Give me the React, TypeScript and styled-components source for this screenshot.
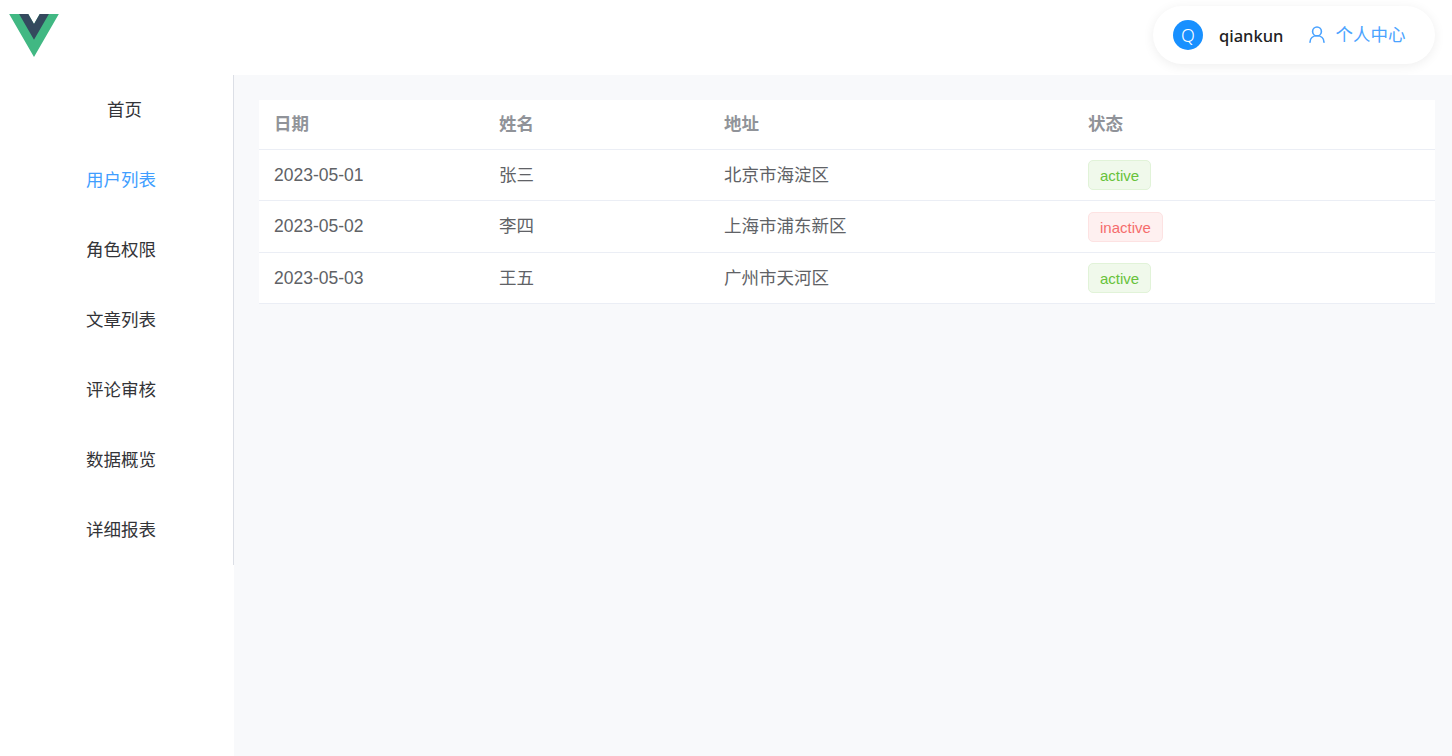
import React from "react"
import styled, { createGlobalStyle } from "styled-components"

const GlobalStyle = createGlobalStyle`
    html, body {
        margin: 0;
        padding: 0;
        background: #fff;
        font-family: "Liberation Sans", "Noto Sans CJK SC", sans-serif;
    }
`

const Page = styled.div`
    width: 1452px;
    height: 756px;
    overflow: hidden;
    display: flex;
    flex-direction: column;
`

const Header = styled.header`
    height: 75px;
    flex: none;
    display: flex;
    align-items: flex-start;
    justify-content: space-between;
    padding: 6px 17px 0 9px;
    box-sizing: border-box;
`

const Logo = styled.svg`
    width: 50px;
    height: 43px;
    margin-top: 8px;
`

const UserCard = styled.div`
    width: 282px;
    height: 58px;
    box-sizing: border-box;
    padding-left: 20px;
    display: flex;
    align-items: center;
    background: #fff;
    border-radius: 29px;
    box-shadow: 0 2px 12px rgba(0, 0, 0, 0.07);
`

const Avatar = styled.div`
    width: 30px;
    height: 30px;
    border-radius: 50%;
    background: #1890ff;
    color: #fff;
    font-family: "Noto Sans", sans-serif;
    font-size: 18px;
    font-weight: 300;
    line-height: 30px;
    text-align: center;
`

const UserName = styled.span`
    margin-left: 16px;
    font-family: "Noto Sans", sans-serif;
    font-size: 16.5px;
    font-weight: 500;
    color: #222;
`

const ProfileLink = styled.a`
    margin-left: 26px;
    display: flex;
    align-items: center;
    gap: 10px;
    font-size: 17.5px;
    line-height: 22px;
    color: #4ba3ff;
`

const ProfileIcon = styled.svg`
    width: 16px;
    height: 17px;
    margin-bottom: 2px;
`

const Body = styled.div`
    flex: 1;
    display: flex;
    min-height: 0;
`

const Sidebar = styled.aside`
    width: 234px;
    flex: none;
`

const Menu = styled.nav`
    border-right: 1px solid #dcdfe6;
`

const MenuItem = styled.div<{ $active?: boolean; $indent?: number }>`
    height: 70px;
    line-height: 70px;
    padding-left: ${({ $indent }) => $indent ?? 86}px;
    font-size: 17.5px;
    color: ${({ $active }) => ($active ? "#409eff" : "#333438")};
`

const Main = styled.main`
    flex: 1;
    background: #f8f9fb;
    padding: 25px 17px 0 25px;
`

const Table = styled.table`
    width: 100%;
    table-layout: fixed;
    border-collapse: separate;
    border-spacing: 0;
    background: #fff;
    font-size: 17.5px;
    line-height: 24px;
    color: #606266;
`

const Th = styled.th<{ $width?: number }>`
    width: ${({ $width }) => ($width ? `${$width}px` : "auto")};
    height: 50px;
    padding: 0 15px 2px;
    box-sizing: border-box;
    text-align: left;
    font-weight: 700;
    color: #909399;
    border-bottom: 1px solid #ebeef5;
`

const Td = styled.td`
    height: 51.25px;
    padding: 0 15px;
    box-sizing: border-box;
    border-bottom: 1px solid #ebeef5;
`

const StatusCell = styled(Td)`
    padding-top: 0.5px;
`

const Tag = styled.span<{ $danger?: boolean }>`
    display: inline-block;
    height: 30px;
    line-height: 29px;
    padding: 0 11px;
    box-sizing: border-box;
    vertical-align: middle;
    font-size: 15px;
    border-radius: 5px;
    border: 1px solid ${({ $danger }) => ($danger ? "#fde2e2" : "#e1f3d8")};
    background: ${({ $danger }) => ($danger ? "#fef0f0" : "#f0f9eb")};
    color: ${({ $danger }) => ($danger ? "#f56c6c" : "#67c23a")};
`

const menus = ["用户列表", "角色权限", "文章列表", "评论审核", "数据概览", "详细报表"]

const rows = [
    { date: "2023-05-01", name: "张三", address: "北京市海淀区", status: "active" },
    { date: "2023-05-02", name: "李四", address: "上海市浦东新区", status: "inactive" },
    { date: "2023-05-03", name: "王五", address: "广州市天河区", status: "active" },
]

export default function App() {
    return (
        <Page>
            <GlobalStyle />
            <Header>
                <Logo viewBox="0 0 261.76 226.69">
                    <path d="M161.096.001l-30.225 52.351L100.647.001H-.005l130.877 226.688L261.749.001z" fill="#41b883" />
                    <path d="M161.096.001l-30.225 52.351L100.647.001H52.346l78.526 136.01L209.398.001z" fill="#34495e" />
                </Logo>
                <UserCard>
                    <Avatar>Q</Avatar>
                    <UserName>qiankun</UserName>
                    <ProfileLink>
                        <ProfileIcon viewBox="0 0 16 17" fill="none" stroke="#4ba3ff" strokeWidth="1.6">
                            <circle cx="8" cy="5.4" r="4.4" />
                            <path d="M1 16.2c0-3.8 2.8-6.4 7-6.4s7 2.6 7 6.4" strokeLinecap="round" />
                        </ProfileIcon>
                        <span>个人中心</span>
                    </ProfileLink>
                </UserCard>
            </Header>
            <Body>
                <Sidebar>
                    <Menu>
                        <MenuItem $indent={107}>首页</MenuItem>
                        {menus.map((m, i) => (
                            <MenuItem key={m} $active={i === 0}>{m}</MenuItem>
                        ))}
                    </Menu>
                </Sidebar>
                <Main>
                    <Table>
                        <thead>
                            <tr>
                                <Th $width={225}>日期</Th>
                                <Th $width={225}>姓名</Th>
                                <Th $width={364}>地址</Th>
                                <Th>状态</Th>
                            </tr>
                        </thead>
                        <tbody>
                            {rows.map((r) => (
                                <tr key={r.date}>
                                    <Td>{r.date}</Td>
                                    <Td>{r.name}</Td>
                                    <Td>{r.address}</Td>
                                    <StatusCell><Tag $danger={r.status === "inactive"}>{r.status}</Tag></StatusCell>
                                </tr>
                            ))}
                        </tbody>
                    </Table>
                </Main>
            </Body>
        </Page>
    )
}
